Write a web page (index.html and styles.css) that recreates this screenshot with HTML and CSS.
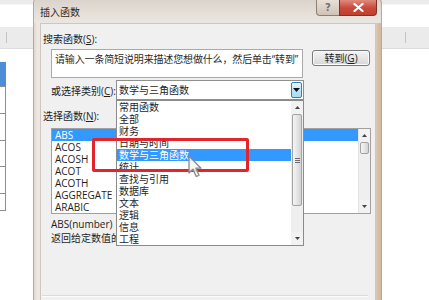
FILE: index.html
```html
<!DOCTYPE html>
<html lang="zh-CN">
<head>
<meta charset="utf-8">
<title>插入函数</title>
<link rel="stylesheet" href="styles.css">
</head>
<body>
<div class="sheet">
  <div class="sheet-top"></div>
  <div class="sheet-head">
    <span class="head-sep head-sep-left"></span>
    <span class="head-sep head-sep-right"></span>
  </div>
  <div class="sheet-body">
    <div class="cells">
      <div class="cell-gap"></div>
      <div class="cell cell-sel"></div>
      <div class="cell cell-27"></div>
      <div class="cell cell-27"></div>
      <div class="cell cell-26"></div>
      <div class="cell cell-27"></div>
      <div class="cell cell-17"></div>
    </div>
  </div>
</div>

<div class="dialog">
  <div class="titlebar">
    <span class="title">插入函数</span>
    <div class="caption-buttons">
      <span class="cap-btn cap-help">?</span>
      <span class="cap-btn cap-close">
        <svg width="11" height="9" viewBox="0 0 11 9"><path d="M1.5 1 L9.5 8 M9.5 1 L1.5 8" stroke="#fff" stroke-width="2.2" stroke-linecap="round"/></svg>
      </span>
    </div>
  </div>
  <div class="client">
    <div class="label">搜索函数(<u>S</u>):</div>
    <div class="search-row">
      <div class="search-box">请输入一条简短说明来描述您想做什么，然后单击“转到”</div>
      <div class="btn">转到(<u>G</u>)</div>
    </div>
    <div class="select-row">
      <span class="select-label">或选择类别(<u>C</u>):</span>
      <div class="select">
        <span class="select-value">数学与三角函数</span>
        <span class="select-arrow">
          <svg width="7" height="4" viewBox="0 0 7 4"><path d="M0 0 H7 L3.5 4 Z" fill="#111"/></svg>
        </span>
      </div>
    </div>
    <div class="label label-fn">选择函数(<u>N</u>):</div>
    <div class="fn-list">
      <div class="fn-items">
        <div class="fn-item fn-item-sel">ABS</div>
        <div class="fn-item">ACOS</div>
        <div class="fn-item">ACOSH</div>
        <div class="fn-item">ACOT</div>
        <div class="fn-item">ACOTH</div>
        <div class="fn-item">AGGREGATE</div>
        <div class="fn-item">ARABIC</div>
      </div>
      <div class="vscroll">
        <span class="sb-btn"><svg width="5" height="3" viewBox="0 0 5 3"><path d="M0 3 L2.5 0 L5 3 Z" fill="#444"/></svg></span>
        <span class="sb-thumb sb-thumb-small"></span>
        <span class="sb-track"></span>
        <span class="sb-btn"><svg width="5" height="3" viewBox="0 0 5 3"><path d="M0 0 H5 L2.5 3 Z" fill="#444"/></svg></span>
      </div>
    </div>
    <div class="sig">ABS(number)</div>
    <div class="sig sig-clip">返回给定数值的绝对值</div>
    <div class="separator"></div>

    <div class="dropdown">
      <div class="dd-items">
        <div class="dd-item">常用函数</div>
        <div class="dd-item">全部</div>
        <div class="dd-item">财务</div>
        <div class="dd-item">日期与时间</div>
        <div class="dd-item dd-item-sel">数学与三角函数</div>
        <div class="dd-item">统计</div>
        <div class="dd-item">查找与引用</div>
        <div class="dd-item">数据库</div>
        <div class="dd-item">文本</div>
        <div class="dd-item">逻辑</div>
        <div class="dd-item">信息</div>
        <div class="dd-item">工程</div>
      </div>
      <div class="vscroll vscroll-dd">
        <span class="sb-btn"><svg width="5" height="3" viewBox="0 0 5 3"><path d="M0 3 L2.5 0 L5 3 Z" fill="#444"/></svg></span>
        <span class="sb-thumb sb-thumb-big"><span class="grip"></span></span>
        <span class="sb-track"></span>
        <span class="sb-btn"><svg width="5" height="3" viewBox="0 0 5 3"><path d="M0 0 H5 L2.5 3 Z" fill="#444"/></svg></span>
      </div>
    </div>

    <div class="highlight-box"></div>

    <svg class="cursor" width="16" height="24" viewBox="0 0 16 24">
      <path d="M1 1 L1 18 L5 14.2 L8.2 21.5 L11 20.3 L7.9 13.2 L13 13.2 Z" fill="#f4f4f4" fill-opacity="0.85" stroke="#8a8a8a" stroke-width="1.3" stroke-linejoin="round"/>
    </svg>
  </div>
</div>
</body>
</html>
```

FILE: styles.css
```css
* { box-sizing: border-box; }

html, body {
  margin: 0;
  padding: 0;
}

body {
  width: 429px;
  height: 300px;
  overflow: hidden;
  background: #ffffff;
  position: relative;
  font-family: "Open Sans", "Noto Sans CJK SC", sans-serif;
  font-size: 10px;
  color: #1e1e1e;
}

u { text-decoration: underline; text-underline-offset: 1px; }

/* ---------- spreadsheet behind ---------- */
.sheet {
  display: flex;
  flex-direction: column;
  width: 429px;
  height: 300px;
}

.sheet-top {
  height: 27px;
  background: linear-gradient(#ececec 0, #ececec 4px, #ffffff 5px);
}

.sheet-head {
  height: 22px;
  background: #ebebeb;
  border-bottom: 1px solid #dcdcdc;
  display: flex;
  align-items: center;
  justify-content: space-between;
  padding: 0 23px 0 6px;
}

.head-sep {
  width: 1px;
  height: 11px;
  background: #c4c4c4;
}

.sheet-body {
  flex: 1;
  display: flex;
}

.cells {
  width: 6px;
  display: flex;
  flex-direction: column;
}

.cell-gap { height: 13px; }

.cell {
  border-right: 1px solid #8e8e8e;
  border-bottom: 1px solid #8e8e8e;
}

.cell-sel { height: 25px; background: #4c8fd8; border-color: #4c8fd8; border-bottom-color: #8e8e8e; }
.cell-27 { height: 27px; }
.cell-26 { height: 26px; }
.cell-17 { height: 17px; }

/* ---------- dialog window ---------- */
.dialog {
  position: absolute;
  left: 33px;
  top: -3px;
  width: 349px;
  height: 303px;
  border: 1px solid #b9a999;
  border-bottom: none;
  border-radius: 6px 6px 0 0;
  background: linear-gradient(90deg, #e3d6c9 0, #ece7e2 3px, #ece7e2 340px, #d9c1aa 343px, #d3b89f 100%);
  display: flex;
  flex-direction: column;
  padding: 0 5px 0 6px;
  overflow: hidden;
}

.titlebar {
  height: 25px;
  flex: none;
  display: flex;
  align-items: flex-start;
  justify-content: space-between;
  background: linear-gradient(#d9d1ca, #e6dfd8 60%, #ebe6e1);
  margin: 0 -5px 0 -6px;
  padding: 0 4px 0 6px;
  border-radius: 6px 6px 0 0;
}

.title {
  margin-top: 8px;
  font-size: 10px;
  line-height: 12px;
  color: #2a2a2a;
}

.caption-buttons {
  display: flex;
  margin-top: 2px;
}

.cap-btn {
  height: 16px;
  display: flex;
  align-items: center;
  justify-content: center;
  border: 1px solid #8c7f74;
  border-top: none;
}

.cap-help {
  width: 23px;
  border-radius: 0 0 0 4px;
  background: linear-gradient(#e8dfd7, #d0c3b7);
  color: #6f6f80;
  font-family: "DejaVu Sans", sans-serif;
  font-size: 10px;
  font-weight: bold;
  border-right: none;
}

.cap-close {
  width: 38px;
  border-radius: 0 0 4px 0;
  background: linear-gradient(#e08a7c, #c9483a 55%, #c04030);
  border-color: #7e3228;
}

.client {
  position: relative;
  flex: 1;
  background: #f0f0f0;
  border: 1px solid #cfc6bd;
  border-bottom: none;
  padding: 9px 5px 0 2px;
  display: flex;
  flex-direction: column;
}

.label {
  height: 12px;
  line-height: 12px;
  white-space: nowrap;
}

.search-row {
  margin: 4px 0 0 8px;
  display: flex;
  align-items: flex-start;
  gap: 9px;
}

.search-box {
  width: 252px;
  height: 29px;
  background: #ffffff;
  border: 1px solid #a9a9a9;
  padding: 3px 0 0 3px;
  line-height: 12px;
  color: #2a2a2a;
  white-space: nowrap;
  overflow: hidden;
  letter-spacing: -0.15px;
}

.btn {
  width: 58px;
  height: 16px;
  margin-top: 1px;
  border: 1px solid #7a7a7a;
  border-radius: 3px;
  background: linear-gradient(#f4f4f4, #e6e6e6 50%, #d6d6d6);
  display: flex;
  align-items: center;
  justify-content: center;
  line-height: 12px;
  box-shadow: inset 0 0 0 1px #fbfbfb;
}

.select-row {
  margin: 2px 0 0 8px;
  display: flex;
  align-items: center;
  height: 20px;
}

.select-label {
  width: 65px;
  white-space: nowrap;
}

.select {
  width: 188px;
  height: 20px;
  background: #ffffff;
  border: 1px solid #8e8f8f;
  display: flex;
  align-items: center;
  justify-content: space-between;
  padding: 0 1px 0 2px;
}

.select-value { line-height: 12px; }

.select-arrow {
  width: 11px;
  height: 16px;
  border: 1px solid #3c7fb1;
  border-radius: 2px;
  background: linear-gradient(#eaf6fd, #bee6fd 50%, #a7d9f5);
  display: flex;
  align-items: center;
  justify-content: center;
}

.label-fn {
  margin-top: 10px;
}

.fn-list {
  margin: 6px 0 0 8px;
  width: 320px;
  height: 86px;
  background: #ffffff;
  border: 1px solid #a0a0a0;
  display: flex;
}

.fn-items {
  flex: 1;
  display: flex;
  flex-direction: column;
}

.fn-item {
  height: 12px;
  line-height: 12px;
  padding-left: 3px;
  color: #1e1e1e;
}

.fn-item-sel {
  background: #3399ff;
  color: #ffffff;
}

.vscroll {
  width: 12px;
  display: flex;
  flex-direction: column;
  background: #efefef;
  border-left: 1px solid #e4e4e4;
}

.sb-btn {
  height: 13px;
  display: flex;
  align-items: center;
  justify-content: center;
  background: #f2f2f2;
}

.sb-thumb {
  margin: 0 1px;
  border: 1px solid #a2a2a2;
  border-radius: 2px;
  background: linear-gradient(90deg, #f5f5f5, #e2e2e2 60%, #d3d3d3);
  display: flex;
  align-items: center;
  justify-content: center;
}

.sb-thumb-small { height: 12px; }
.sb-thumb-big { height: 92px; }

.grip {
  width: 5px;
  height: 5px;
  background: repeating-linear-gradient(#6c6c6c 0, #6c6c6c 1px, transparent 1px, transparent 2px);
}

.sb-track { flex: 1; }

.sig {
  margin: 4px 0 0 8px;
  height: 12px;
  line-height: 12px;
  white-space: nowrap;
}

.sig + .sig { margin-top: 2px; }

.sig-clip {
  width: 65px;
  overflow: hidden;
}

.separator {
  margin: 51px 2px 0 -1px;
  height: 2px;
  border-top: 1px solid #dadada;
  border-bottom: 1px solid #fbfbfb;
}

/* ---------- open combobox list (overlay) ---------- */
.dropdown {
  position: absolute;
  left: 75px;
  top: 76px;
  width: 188px;
  height: 146px;
  background: #ffffff;
  border: 1px solid #8a8a8a;
  display: flex;
}

.dd-items {
  flex: 1;
  display: flex;
  flex-direction: column;
}

.dd-item {
  height: 12px;
  line-height: 12px;
  padding-left: 2px;
  color: #1e1e1e;
  white-space: nowrap;
}

.dd-item-sel {
  background: #3399ff;
  color: #ffffff;
}

.vscroll-dd {
  width: 12px;
  border-left: none;
}

/* ---------- annotation overlays ---------- */
.highlight-box {
  position: absolute;
  left: 51px;
  top: 114px;
  width: 157px;
  height: 34px;
  border: 3px solid #e3242b;
  border-radius: 2px;
}

.cursor {
  position: absolute;
  left: 147px;
  top: 131px;
}
```
